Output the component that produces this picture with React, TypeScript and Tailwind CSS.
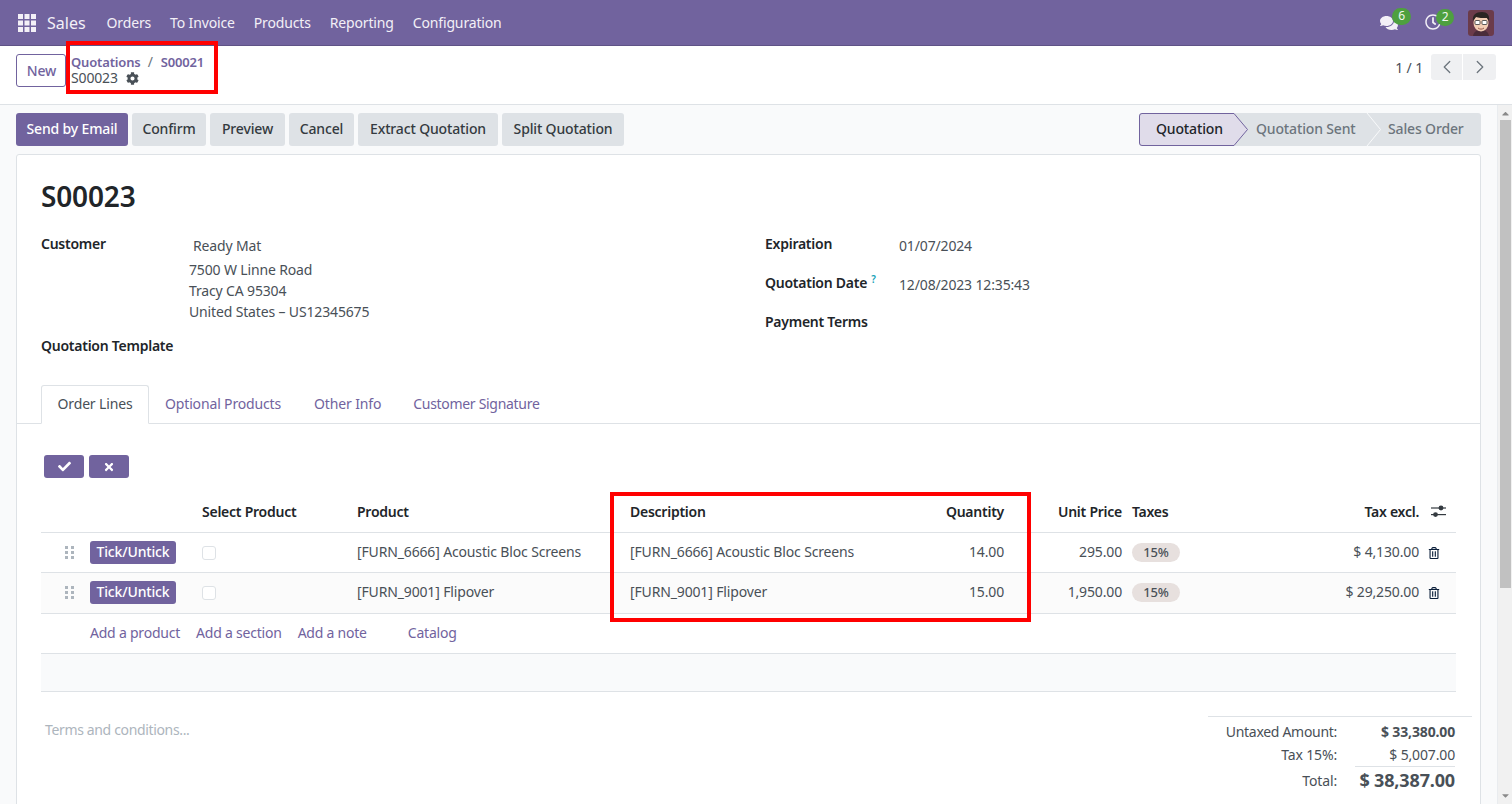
import React from "react";
import { FaCog, FaCheck, FaTimes, FaRegTrashAlt, FaComments, FaRegClock, FaCaretUp, FaCaretDown } from "react-icons/fa";
import { LuChevronLeft, LuChevronRight } from "react-icons/lu";

const font = { fontFamily: '"Noto Sans", sans-serif' };

function AppsIcon() {
  return (
    <svg width="18" height="18" viewBox="0 0 18 18" fill="#f3f0f7">
      {[0, 6.5, 13].map((y) => [0, 6.5, 13].map((x) => <rect key={`${x}-${y}`} x={x} y={y} width="5" height="5" />))}
    </svg>
  );
}

function Avatar() {
  return (
    <svg width="26" height="26" viewBox="0 0 26 26" className="rounded-[3px]">
      <rect width="26" height="26" fill="#6b3b4a" />
      <path d="M5 26c1-5 4-6 8-6s7 1 8 6z" fill="#4a2c3a" />
      <ellipse cx="13" cy="13" rx="7.5" ry="8.5" fill="#f3cdb4" />
      <path d="M5 11C4 5 8 2 14 2c5 0 8 3 7 9l-2-3c-4 0-9 0-11-1z" fill="#2b2523" />
      <rect x="7" y="10.5" width="5" height="4" rx="1" fill="#fff" stroke="#333" strokeWidth=".8" />
      <rect x="14" y="10.5" width="5" height="4" rx="1" fill="#fff" stroke="#333" strokeWidth=".8" />
      <path d="M10 18c2 1.500 4 1.500 6 0" stroke="#9a5a4a" strokeWidth="1" fill="none" />
    </svg>
  );
}

function Grip() {
  return (
    <svg width="9" height="13" viewBox="0 0 9 13" fill="#adb5bd">
      {[0, 5, 10].map((y) => [0, 6].map((x) => <rect key={`${x}-${y}`} x={x} y={y} width="3" height="3" />))}
    </svg>
  );
}

function Sliders() {
  return (
    <svg width="15" height="12" viewBox="0 0 15 12" fill="#343a40">
      <rect x="0" y="2.400" width="15" height="1.200" />
      <circle cx="10" cy="3" r="2.400" />
      <rect x="0" y="9" width="15" height="1.200" />
      <circle cx="4.500" cy="9.600" r="2.400" />
    </svg>
  );
}

function Row({ code, name, qty, price, total, alt }: { code: string; name: string; qty: string; price: string; total: string; alt?: boolean }) {
  return (
    <div className={`flex items-center border-b border-[#dee2e6] text-[14px] text-[#495057] ${alt ? "h-[41px] bg-[#fbfbfb] pb-[1px]" : "h-[40px]"}`}>
      <div className="flex w-[49px] justify-center pl-[7px]"><Grip /></div>
      <div className="w-[112px]">
        <span className="inline-flex h-[23px] w-[86px] items-center justify-center rounded-[3px] bg-[#71639e] pb-[2px] text-[14px] font-medium text-white">Tick/Untick</span>
      </div>
      <div className="w-[155px]">
        <span className="block h-[14px] w-[14px] rounded-[3px] border border-[#dee2e6] bg-white" />
      </div>
      <div className="w-[273px] whitespace-nowrap pb-[2px]">[{code}] {name}</div>
      <div className="w-[250px] whitespace-nowrap pb-[2px]">[{code}] {name}</div>
      <div className="w-[124px] pb-[2px] text-right">{qty}</div>
      <div className="w-[118px] pb-[2px] text-right">{price}</div>
      <div className="w-[10px]" />
      <div className="w-[48px]">
        <span className="flex h-[19px] w-[48px] items-center justify-center rounded-full bg-[#e7e0de] text-[13px] font-medium text-[#495057]">15%</span>
      </div>
      <div className="w-[239px] pb-[2px] text-right">{total}</div>
      <div className="flex w-[37px] justify-center pr-[7px] text-[#0b1f3a]"><FaRegTrashAlt size={12} /></div>
    </div>
  );
}

export default function App() {
  return (
    <div style={font} className="relative flex h-[804px] w-[1512px] flex-col overflow-hidden bg-white text-[14px] tracking-[-0.15px] text-[#495057]">
      <nav className="flex h-[46px] shrink-0 items-center justify-between border-b border-[#5f5386] bg-[#71639e] text-white">
        <div className="flex items-center">
          <div className="ml-[18px]"><AppsIcon /></div>
          <span className="ml-[11px] text-[16px] tracking-normal text-[#f3f0f7]">Sales</span>
          <div className="ml-[21px] flex gap-[19px] text-[14px] text-[#f3f0f7]">
            <span>Orders</span><span>To Invoice</span><span>Products</span><span>Reporting</span><span>Configuration</span>
          </div>
        </div>
        <div className="flex items-center">
          <div className="relative mr-[27px] text-[#f3f0f7]">
            <FaComments size={18} />
            <span className="absolute left-[12px] top-[-6px] flex h-[17px] w-[19px] items-center justify-center rounded-full bg-[#4ea03f] text-[12px] text-[#f0f7ee]">6</span>
          </div>
          <div className="relative mr-[27px] mt-[-2px] text-[#f3f0f7]">
            <FaRegClock size={16} />
            <span className="absolute left-[11px] top-[-5px] flex h-[17px] w-[18px] items-center justify-center rounded-full bg-[#4ea03f] text-[12px] text-[#f0f7ee]">2</span>
          </div>
          <div className="mr-[18px]"><Avatar /></div>
        </div>
      </nav>

      <div className="flex h-[59px] shrink-0 items-start justify-between border-b border-[#dee2e6] bg-white">
        <div className="flex">
          <button className="ml-[16px] mt-[8px] h-[33px] w-[50px] rounded-[3px] border border-[#71639e] bg-white pl-[1px] text-[14px] font-medium text-[#71639e]">New</button>
          <div className="ml-[5px] mt-[8px] leading-[16px]">
            <div className="flex text-[13px] font-semibold tracking-[-0.15px] text-[#71639e]">
              <span>Quotations</span><span className="ml-[7px] mr-[8px] text-[14px] font-normal text-[#6c757d]">/</span><span>S00021</span>
            </div>
            <div className="flex items-center text-[14px] text-[#495057]">
              <span>S00023</span><FaCog size={13} className="ml-[8px] text-[#495057]" />
            </div>
          </div>
        </div>
        <div className="mr-[16px] mt-[8px] flex items-center">
          <span className="mr-[8px] text-[14px]">1 / 1</span>
          <div className="flex h-[26px] w-[65px] overflow-hidden rounded-[3px] bg-[#eff0f2] text-[#6c757d]">
            <span className="flex w-[32px] items-center justify-center border-r border-white"><LuChevronLeft size={22} strokeWidth={1.4} /></span>
            <span className="flex w-[33px] items-center justify-center"><LuChevronRight size={22} strokeWidth={1.4} /></span>
          </div>
        </div>
      </div>

      <div className="flex min-h-0 flex-1 bg-[#f9fafb]">
        <main className="w-[1497px] shrink-0 px-[16px]">
          <div className="flex h-[41px] items-end justify-between">
            <div className="flex gap-[4px]">
              <button className="h-[33px] w-[112px] rounded-[3px] bg-[#71639e] pb-[2px] font-medium text-white">Send by Email</button>
              <button className="h-[33px] w-[74px] rounded-[3px] bg-[#dee2e6] pb-[2px] font-medium text-[#343a40]">Confirm</button>
              <button className="h-[33px] w-[75px] rounded-[3px] bg-[#dee2e6] pb-[2px] font-medium text-[#343a40]">Preview</button>
              <button className="h-[33px] w-[65px] rounded-[3px] bg-[#dee2e6] pb-[2px] font-medium text-[#343a40]">Cancel</button>
              <button className="h-[33px] w-[140px] rounded-[3px] bg-[#dee2e6] pb-[2px] font-medium text-[#343a40]">Extract Quotation</button>
              <button className="h-[33px] w-[122px] rounded-[3px] bg-[#dee2e6] pb-[2px] font-medium text-[#343a40]">Split Quotation</button>
            </div>
            <div className="relative flex h-[33px] w-[342px] items-center rounded-[3px] bg-[#dee2e6] pb-[2px] font-medium text-[#6c757d]">
              <svg width="342" height="33" className="absolute left-0 top-0">
                <path d="M3 .5H95L108.500 16.500L95 32.500H3Q.5 32.500 .5 30V3Q.5 .5 3 .5Z" fill="#e0dcea" stroke="#71639e" />
                <path d="M228 0L241.500 16.500L228 33" fill="none" stroke="#f9fafb" />
              </svg>
              <span className="relative ml-[17px] w-[100px] text-[#212529]">Quotation</span>
              <span className="relative w-[132px]">Quotation Sent</span>
              <span className="relative">Sales Order</span>
            </div>
          </div>

          <div className="mt-[8px] h-[700px] w-[1465px] rounded-t-[3px] border border-[#dee2e6] bg-white px-[24px]">
            <h1 className="mt-[20px] text-[28px] font-semibold leading-[42px] text-[#212529]">S00023</h1>
            <div className="mt-[16px] flex h-[148px]">
              <div className="w-[724px]">
                <div className="flex">
                  <span className="w-[148px] font-semibold leading-[21px] tracking-[-0.25px] text-[#212529]">Customer</span>
                  <div className="leading-[21px]">
                    <div className="mb-[3px] ml-[4px] mt-[2px]">Ready Mat</div>
                    <div>7500 W Linne Road</div>
                    <div>Tracy CA 95304</div>
                    <div>United States – US12345675</div>
                  </div>
                </div>
                <div className="mt-[13px] font-semibold leading-[21px] tracking-[-0.25px] text-[#212529]">Quotation Template</div>
              </div>
              <div>
                <div className="flex leading-[21px]">
                  <span className="w-[134px] font-semibold tracking-[-0.25px] text-[#212529]">Expiration</span>
                  <span className="mt-[2px]">01/07/2024</span>
                </div>
                <div className="mt-[16px] flex leading-[21px]">
                  <span className="w-[134px] font-semibold tracking-[-0.25px] text-[#212529]">Quotation Date<sup className="ml-[4px] text-[10px] font-semibold text-[#17a2b8]">?</sup></span>
                  <span className="mt-[2px]">12/08/2023 12:35:43</span>
                </div>
                <div className="mt-[16px] font-semibold leading-[21px] tracking-[-0.25px] text-[#212529]">Payment Terms</div>
              </div>
            </div>

            <div className="mx-[-24px] mt-[4px] flex h-[39px] items-end border-b border-[#dee2e6] pl-[24px] text-[#71639e]">
              <span className="mb-[-1px] flex h-[39px] w-[108px] items-center justify-center rounded-t-[3px] border border-[#dee2e6] border-b-white bg-white pb-[2px] text-[#495057]">Order Lines</span>
              <span className="flex h-[38px] items-center px-[16px] pb-[2px]">Optional Products</span>
              <span className="flex h-[38px] items-center px-[17px] pb-[2px]">Other Info</span>
              <span className="flex h-[38px] items-center px-[15px] pb-[2px] tracking-[-0.3px]">Customer Signature</span>
            </div>

            <div className="ml-[3px] mt-[31px] flex gap-[5px]">
              <span className="flex h-[23px] w-[40px] items-center justify-center rounded-[3px] bg-[#71639e] text-white"><FaCheck size={13} /></span>
              <span className="flex h-[23px] w-[40px] items-center justify-center rounded-[3px] bg-[#71639e] text-white"><FaTimes size={12} /></span>
            </div>

            <div className="mt-[12px]">
              <div className="flex h-[43px] items-center border-b border-[#dee2e6] font-semibold tracking-[-0.25px] text-[#212529]">
                <div className="w-[161px]" />
                <div className="w-[155px]">Select Product</div>
                <div className="w-[273px]">Product</div>
                <div className="w-[250px]">Description</div>
                <div className="w-[124px] text-right">Quantity</div>
                <div className="w-[118px] text-right">Unit Price</div>
                <div className="w-[10px]" />
                <div className="w-[48px]">Taxes</div>
                <div className="w-[239px] text-right">Tax excl.</div>
                <div className="flex w-[37px] justify-center pl-[1px]"><Sliders /></div>
              </div>
              <Row code="FURN_6666" name="Acoustic Bloc Screens" qty="14.00" price="295.00" total="$ 4,130.00" />
              <Row code="FURN_9001" name="Flipover" qty="15.00" price="1,950.00" total="$ 29,250.00" alt />
              <div className="flex h-[40px] items-center border-b border-[#dee2e6] pb-[2px] pl-[49px] tracking-[-0.22px] text-[#71639e]">
                <span>Add a product</span><span className="ml-[16px]">Add a section</span><span className="ml-[16px]">Add a note</span><span className="ml-[41px]">Catalog</span>
              </div>
              <div className="h-[38px] border-b border-[#dee2e6] bg-[#f9fafb]" />
            </div>

            <div className="mt-[24px] flex justify-between">
              <span className="ml-[4px] mt-[3px] tracking-[-0.35px] text-[#adb5bd]">Terms and conditions...</span>
              <div className="mr-[-16px] w-[264px] border-t border-[#dee2e6] pt-[3px]">
                <div className="flex h-[23px] items-center justify-end pr-[17px]"><span className="mr-[18px] tracking-[-0.3px]">Untaxed Amount:</span><span className="w-[100px] text-right font-bold">$ 33,380.00</span></div>
                <div className="flex h-[23px] items-center justify-end pr-[17px]"><span className="mr-[18px]">Tax 15%:</span><span className="w-[100px] text-right">$ 5,007.00</span></div>
                <div className="flex h-[28px] items-center justify-end pr-[17px]"><span className="mr-[18px]">Total:</span><span className="w-[100px] whitespace-nowrap border-t border-[#dee2e6] text-right text-[18px] font-bold">$ 38,387.00</span></div>
              </div>
            </div>
          </div>
        </main>
        <div className="flex w-[15px] flex-col items-center border-l border-[#e9ecef] bg-[#f1f1f1] text-[#8a8a8a]">
          <FaCaretUp size={11} className="mt-[3px]" />
          <div className="mt-[1px] h-[468px] w-[11px] bg-[#c1c1c1]" />
          <div className="flex-1" />
          <FaCaretDown size={11} className="mb-[3px]" />
        </div>
      </div>

      <div className="pointer-events-none absolute left-[66px] top-[41px] h-[53px] w-[152px] border-[4px] border-[#ff0000]" />
      <div className="pointer-events-none absolute left-[610px] top-[492px] h-[130px] w-[421px] border-[4px] border-[#ff0000]" />
    </div>
  );
}
